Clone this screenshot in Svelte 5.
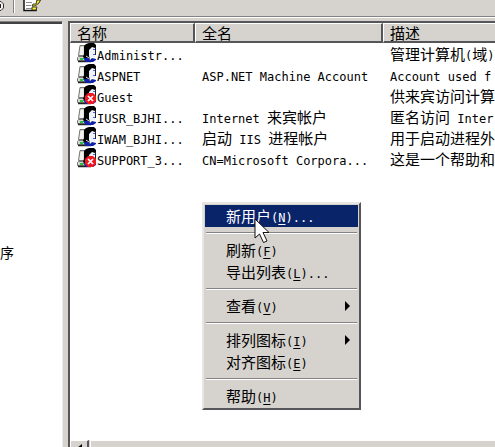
<script>
    const users = [
        { name: 'Administr...', fullName: '', description: '管理计算机(域)', disabled: false },
        { name: 'ASPNET', fullName: 'ASP.NET Machine Account', description: 'Account used f', disabled: false },
        { name: 'Guest', fullName: '', description: '供来宾访问计算', disabled: true },
        { name: 'IUSR_BJHI...', fullName: 'Internet 来宾帐户', description: '匿名访问 Inter', disabled: false },
        { name: 'IWAM_BJHI...', fullName: '启动 IIS 进程帐户', description: '用于启动进程外', disabled: false },
        { name: 'SUPPORT_3...', fullName: 'CN=Microsoft Corpora...', description: '这是一个帮助和', disabled: true }
    ];

    const menuGroups = [
        [{ label: '新用户', key: 'N', dots: true }],
        [{ label: '刷新', key: 'F' }, { label: '导出列表', key: 'L', dots: true }],
        [{ label: '查看', key: 'V', submenu: true }],
        [{ label: '排列图标', key: 'I', submenu: true }, { label: '对齐图标', key: 'E' }],
        [{ label: '帮助', key: 'H' }]
    ];

    let active = $state('N');

    // Latin runs use a smaller monospace face than the Chinese ones
    function runs(text) {
        return text.match(/[\x20-\x7e]+|[^\x20-\x7e]+/g) ?? [];
    }
</script>

{#snippet mixed(text)}
    {#each runs(text) as run}{#if run.charCodeAt(0) < 127}<span class="latin">{run}</span>{:else}{run}{/if}{/each}
{/snippet}

<div class="window">
    <div class="toolbar">
        <button class="tool refresh" aria-label="刷新">
            <svg width="6" height="13" viewBox="0 0 6 13">
                <path d="M0 1.500h1l2.500 2.500v4L1 10.500H0" fill="#f4f2ee" stroke="#333" />
                <path d="M0 4h1v4H0z" fill="#222" />
            </svg>
        </button>
        <span class="divider"></span>
        <button class="tool" aria-label="导出列表">
            <svg width="19" height="13" viewBox="0 0 19 13">
                <path d="M1 0h12v11H1z" fill="#fff" />
                <path d="M1 0v10.500h12V8" fill="none" stroke="#111" stroke-width="1.500" />
                <path d="M3 2.500h6M3 5.500h5M3 8.500h6" stroke="#8c8c8c" />
                <path d="M17.500 0l-1.500 3-4 3H9l1-2h3l1-4z" fill="#f5ed20" stroke="#111" stroke-width=".8" />
                <path d="M9 7h5l-1 3H9z" fill="#f5ed20" stroke="#222" stroke-width=".8" />
            </svg>
        </button>
    </div>

    <div class="panes">
        <nav class="tree"><a href="#services">序</a></nav>

        <main class="list">
            <table>
                <colgroup>
                    <col class="col-name" />
                    <col class="col-full" />
                    <col />
                </colgroup>
                <thead>
                    <tr>
                        <th>名称</th>
                        <th>全名</th>
                        <th>描述</th>
                    </tr>
                </thead>
                <tbody>
                    {#each users as user}
                        <tr>
                            <td>
                                <div class="user">
                                    <svg width="20" height="20" viewBox="0 0 20 20">
                                        <path d="M3 2.500h7v10H1.500z" fill="#d0d0cc" stroke="#777" />
                                        <path d="M3.500 4h3v8h-4z" fill="#f2f2f0" />
                                        <path d="M1.500 13.500h11v4H.5v-3z" fill="#d4d4d0" stroke="#777" />
                                        <path d="M1 18.500h13" stroke="#222" stroke-width="1.500" />
                                        <path d="M3 16h3" stroke="#25c635" stroke-width="2" />
                                        <path d="M7 3l2-2 3-1h5l2 2v4l-3-1-2 3v4l-2 4H8l-2-2 1-3z" fill="#000" />
                                        <path d="M12 7l3-3 3 1 1 3-1 2v4h-3l-2 2-1-3z" fill="#eef3fb" />
                                        <path d="M16 6.500h2M16 11.500h2" stroke="#4a5ee8" />
                                        <path d="M18.500 4v8" stroke="#222" />
                                        <path d="M6 15h5l2 2 2-2 4 1v1l-3 2H9z" fill="#1020a8" />
                                        <path d="M9 13l3 2" stroke="#dfe7f4" fill="none" />
                                        {#if user.disabled}
                                            <path d="M11 8h5l3 3v5l-3 3h-5l-3-3v-5z" fill="#ef1720" />
                                            <path d="M11 11l5 5m0-5l-5 5" stroke="#fff" stroke-width="1.700" />
                                        {/if}
                                    </svg>
                                    <span>{@render mixed(user.name)}</span>
                                </div>
                            </td>
                            <td>{@render mixed(user.fullName)}</td>
                            <td>{@render mixed(user.description)}</td>
                        </tr>
                    {/each}
                </tbody>
            </table>

            <div class="scrollbar">
                <button aria-label="向左滚动">
                    <svg width="5" height="8" viewBox="0 0 5 8"><path d="M5 0v8L0 4z" /></svg>
                </button>
                <div class="thumb"></div>
            </div>
        </main>
    </div>

    <div class="menu" role="menu">
        {#each menuGroups as group, i}
            {#if i > 0}
                <div class="separator" role="separator"></div>
            {/if}
            {#each group as item}
                <button
                    class="item"
                    class:active={active === item.key}
                    role="menuitem"
                    onmouseenter={() => (active = item.key)}
                >
                    <span>{item.label}<span class="latin">(<u>{item.key}</u>){item.dots ? '...' : ''}</span></span>
                    {#if item.submenu}
                        <svg width="5" height="10" viewBox="0 0 5 10"><path d="M0 0l5 5-5 5z" fill="currentColor" /></svg>
                    {/if}
                </button>
            {/each}
        {/each}
    </div>

    <svg class="cursor" width="17" height="26" viewBox="0 0 17 26">
        <path d="M1 1v19l4.500-4 4 8.500 3.500-1.500-4-8.500H15z" fill="#fff" stroke="#111" />
    </svg>
</div>

<style>
    :global(body) {
        margin: 0;
        background: #d6d3ce;
    }

    .window {
        position: relative;
        display: flex;
        flex-direction: column;
        height: 100vh;
        overflow: hidden;
        font-family: "Noto Sans CJK SC", sans-serif;
        font-size: 15px;
        line-height: 21px;
        color: #000;
        background: #d6d3ce;
    }

    .latin {
        font-family: "DejaVu Sans Mono", monospace;
        font-size: 12px;
        line-height: 1;
    }

    button {
        margin: 0;
        padding: 0;
        border: 0;
        background: none;
        font: inherit;
        color: inherit;
    }

    .toolbar {
        display: flex;
        align-items: flex-start;
        height: 16px;
        border-bottom: 1px solid #848284;
        box-shadow: 0 1px #fff;
    }

    .tool svg {
        display: block;
    }

    .divider {
        width: 1px;
        height: 13px;
        margin: 0 9px 0 7px;
        background: #848284;
        box-shadow: 1px 0 #fff;
    }

    .panes {
        flex: 1;
        display: flex;
        gap: 5px;
        min-height: 0;
        padding-top: 4px;
    }

    .tree {
        flex: 0 0 62px;
        border-top: 1px solid #848284;
        border-right: 1px solid #eceae6;
        box-shadow: inset 0 2px #424142;
        background: #fff;
    }

    .tree a {
        display: block;
        padding-top: 220px;
        color: #000;
        font-size: 14px;
        text-decoration: none;
    }

    .list {
        flex: 1;
        min-width: 0;
        display: flex;
        flex-direction: column;
        justify-content: space-between;
        overflow: hidden;
        border: solid #55555a;
        border-width: 2px 0 0 2px;
        background: #fff;
    }

    table {
        width: 100%;
        table-layout: fixed;
        border-collapse: separate;
        border-spacing: 0;
    }

    .col-name {
        width: 125px;
    }

    .col-full {
        width: 188px;
    }

    th {
        height: 17px;
        padding: 0 0 0 6px;
        border: solid;
        border-width: 1px 2px 2px 1px;
        border-color: #fff #55555a #55555a #fff;
        background: #d6d3ce;
        font-weight: normal;
        line-height: 17px;
        text-align: left;
    }

    th:last-child {
        border-right: 0;
    }

    td {
        height: 21px;
        padding: 0 0 0 7px;
        line-height: 21px;
        white-space: nowrap;
    }

    .user {
        display: flex;
        height: 21px;
    }

    .scrollbar {
        display: flex;
        flex: 0 0 7px;
        overflow: hidden;
        background: #d6d3ce;
    }

    .scrollbar button {
        display: flex;
        justify-content: center;
        width: 19px;
        padding-top: 3px;
        border-top: 1px solid #fff;
        border-left: 1px solid #fff;
        border-right: 2px solid #55555a;
    }

    .scrollbar .thumb {
        flex: 1;
        margin-left: 1px;
        border-top: 1px solid #fff;
        border-left: 1px solid #fff;
    }

    .menu {
        position: absolute;
        top: 202px;
        left: 202px;
        width: 153px;
        padding: 1px;
        border: 2px solid;
        border-color: #e8e6e2 #55555a #55555a #e8e6e2;
        background: #d6d3ce;
    }

    .item {
        display: flex;
        align-items: center;
        justify-content: space-between;
        width: 100%;
        height: 22px;
        padding: 0 8px 0 21px;
        line-height: 22px;
    }

    .item.active {
        background: #0a246a;
        color: #fff;
    }

    .item u {
        text-underline-offset: 2px;
    }

    .separator {
        height: 1px;
        margin: 5px 1px;
        border-top: 1px solid #848284;
        background: #fff;
    }

    .cursor {
        position: absolute;
        top: 218px;
        left: 254px;
        pointer-events: none;
    }
</style>
